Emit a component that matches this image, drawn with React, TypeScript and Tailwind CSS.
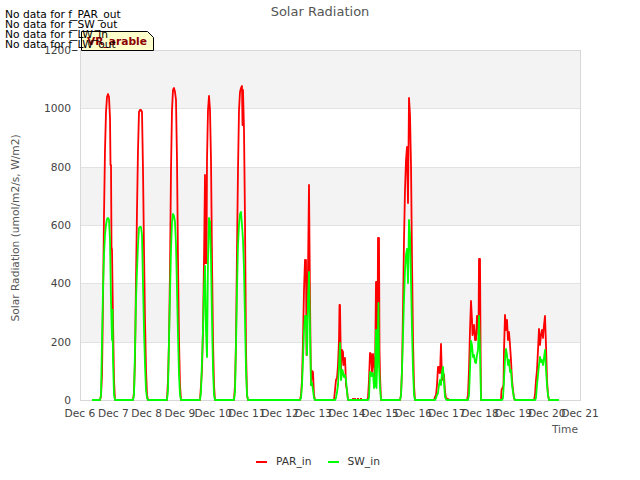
const font = "font-['DejaVu_Sans',sans-serif]";

const red: string[] = [
  "92,400 100,400 101,396 102,375 103,300 104,215 105,150 106,112 107,97 108,94 109,97 110,118 110.5,165 111,165 111.5,247 112,250 113,320 114,380 115,400 133,400 134,392 135,360 136,280 137,210 138,150 139,112 140,110 141,110 142,112 143,170 144,250 145,320 146,370 147,395 148,400 167,400 168,380 169,340 170,270 171,170 172,110 173,90 174,88 175,92 176,100 177,160 178,260 179,340 180,385 181,400 200,400 201,385 202,370 203,330 204,260 205,175 205.5,263 206.5,263 207,160 208,110 209,96 210,110 211,160 212,260 213,340 214,385 215,400 234,400 235,385 236,340 237,250 238,170 239,110 240,92 241,88 242,86 242.5,125 243,90 244,130 245,220 246,350 247,395 248,400 300,400 301,395 302,380 303,340 304,290 305,260 306,260 306.5,355 308,272 309,185 310,300 311,385 312,371 313,372 314,395 315,400 334,400 335,390 336,380 337,378 338,365 339,340 339.5,305 340,305 341,370 342,350 343,352 343.5,365 345,358 345.5,370 346,385 347,390 348,400 367,400 368,398 369,380 370,353 371,354 372,372 373,354 374,365 375,380 376,282 377,282 377.5,350 378,238 379,238 379.5,350 380,375 381,400 400,400 401,395 402,370 403,310 404,240 405,190 406,160 407,147 408,203 409,98 410,115 411,165 412,260 413,340 414,385 415,400 434,400 435,397 436,395 437,385 438,367 439,367 439.5,373 440,373 441,344 442,380 443,373 444,375 445,392 446,398 448,399 449,400 467,400 468,395 469,370 470,330 471,301 472,320 472.5,335 474,325 475,340 476,340 477,316 478,316 478.5,335 479,259 480,259 480.5,340 481,400 501,400 501.5,390 502.5,388 503.5,385 504,350 505,315 506,330 507,320 508,340 509,332 510,345 511,360 512,380 513,390 514,398 515,400 534,400 535,395 536,380 537,370 538,350 539,329 540,345 541,335 542,330 543,338 544,325 545,316 546,345 547,380 548,395 549,400 559,400",
];
const redBits = ["352,399 356,399", "357,399 359,399", "360,399 362,399"];
const green =
  "92,400 100,400 101,395 102,340 103,290 104,255 105,235 106,225 107,219 108,218 109,220 110,240 111,300 112,340 112.5,310 113,360 114,395 115,400 133,400 134,395 135,350 136,300 137,270 138,245 139,228 140,227 141,227 142,235 143,285 144,330 145,365 146,390 147,398 148,400 167,400 168,390 169,340 170,295 171,250 172,222 173,214 174,216 175,222 176,245 177,290 178,335 179,375 180,395 181,400 200,400 201,392 202,360 203,330 204,290 205,266 206,330 207,357 208,260 209,218 210,222 211,260 212,320 213,370 214,395 215,400 234,400 235,392 236,345 237,290 238,245 239,225 240,214 241,212 242,225 243,240 244,270 245,320 246,370 247,395 248,400 300,400 301,398 302,385 303,360 304,330 305,316 306,316 307,355 308,300 309,272 310,330 311,385 312,383 313,390 314,398 315,400 335,400 336,398 337,392 338,385 339,365 340,343 341,380 342.5,370 344,377 345,375 346,380 347,392 348,400 368,400 369,398 370,372 371,373 371.5,376 373,373 374,388 375,385 376,330 376.5,388 377,370 378.5,303 379,365 380,388 381,400 400,400 401,396 402,370 403,335 404,300 405,270 406,255 407,249 408,283 409,220 410,235 411,280 412,330 413,370 414,395 415,400 435,400 436,398 437,395 438,393 439,385 440,380 441,385 442,372 443,367 444,382 445,397 446,399 447,400 468,400 469,395 470,370 471,341 472,345 473,357 474,355 475,362 476,363 477,355 478,350 479,316 480,350 481,400 502,400 503,398 504,380 505,360 506,349 507,355 508,365 509,360 510,372 511,370 512,385 513,392 514,398 515,400 535,400 536,398 537,385 538,375 539,365 540,357 541,362 542,360 543,365 544,358 545,350 546,370 547,385 548,395 549,400 559,400";

const dayTicks = [6, 7, 8, 9, 10, 11, 12, 13, 14, 15, 16, 17, 18, 19, 20, 21];
const valueTicks = [
  { label: "0", y: 400 },
  { label: "200", y: 342 },
  { label: "400", y: 283 },
  { label: "600", y: 225 },
  { label: "800", y: 167 },
  { label: "1000", y: 108 },
  { label: "1200", y: 50 },
];

function Chart() {
  return (
    <svg viewBox="0 22 640 423" className="block w-[640px] h-[423px]" style={{ fontFamily: "'DejaVu Sans', sans-serif" }}>
      <rect x="80" y="50" width="500" height="58" fill="#f3f3f3" />
      <rect x="80" y="167" width="500" height="58" fill="#f3f3f3" />
      <rect x="80" y="283" width="500" height="59" fill="#f3f3f3" />
      {[108, 167, 225, 283, 342].map((y) => (
        <line key={y} x1="80" x2="580" y1={y + 0.5} y2={y + 0.5} stroke="#e2e2e2" />
      ))}
      <rect x="80.5" y="50.5" width="500" height="350" fill="none" stroke="#d8d8d8" />
      {valueTicks.map((t) => (
        <text key={t.label} x="71" y={t.y + 3.5} textAnchor="end" fontSize="10.67" fill="#444444">
          {t.label}
        </text>
      ))}
      {dayTicks.map((d, i) => (
        <text key={d} x={80 + (i * 500) / 15} y="417" textAnchor="middle" fontSize="10.67" fill="#444444">
          {`Dec ${d}`}
        </text>
      ))}
      <text x="578" y="433" textAnchor="end" fontSize="10.67" fill="#555555">
        Time
      </text>
      <text transform="translate(19 228) rotate(-90)" textAnchor="middle" fontSize="10.67" fill="#555555">
        Solar Radiation (umol/m2/s, W/m2)
      </text>
      {red.map((p, i) => (
        <polyline key={i} points={p} fill="none" stroke="#ff0000" strokeWidth="1.8" strokeLinejoin="round" />
      ))}
      {redBits.map((p, i) => (
        <polyline key={i} points={p} fill="none" stroke="#ff0000" strokeWidth="1.8" />
      ))}
      <polyline points={green} fill="none" stroke="#00ff00" strokeWidth="1.8" strokeLinejoin="round" />
    </svg>
  );
}

function LegendItem({ color, label }: { color: string; label: string }) {
  return (
    <div className="flex items-center gap-[9px]">
      <span className={`block w-[11px] h-[2px] ${color}`} />
      <span className="text-[10.67px] leading-[14px] text-[#333333]">{label}</span>
    </div>
  );
}

export default function App() {
  return (
    <div className={`relative w-[640px] h-[480px] overflow-hidden bg-white ${font}`}>
      <h1 className="h-[22px] pt-[4px] text-center text-[13px] leading-[15px] font-normal text-[#555555]">
        Solar Radiation
      </h1>
      <Chart />
      <div className="flex justify-center gap-[16px] pt-[10px] pr-[4px]">
        <LegendItem color="bg-[#ff0000]" label="PAR_in" />
        <LegendItem color="bg-[#00ff00]" label="SW_in" />
      </div>

      <div className="absolute left-[81px] top-[31px] w-[73px] h-[20px]">
        <svg viewBox="0 0 73 20" className="absolute inset-0 w-[73px] h-[20px]">
          <polygon points="0.5,0.5 66.5,0.5 72.5,6.5 72.5,19.5 0.5,19.5" fill="#ffffcc" stroke="#000000" />
        </svg>
        <span className="absolute left-[6px] top-[4px] text-[10.67px] leading-[14px] font-bold text-[#8b0000] whitespace-nowrap">
          VR_arable
        </span>
      </div>

      <div className="absolute left-[5px] top-[10px] text-[10.67px] leading-[10px] text-black whitespace-nowrap">
        <div>No data for f_PAR_out</div>
        <div>No data for f_SW_out</div>
        <div>No data for f_LW_in</div>
        <div>No data for f_LW_out</div>
      </div>
    </div>
  );
}
